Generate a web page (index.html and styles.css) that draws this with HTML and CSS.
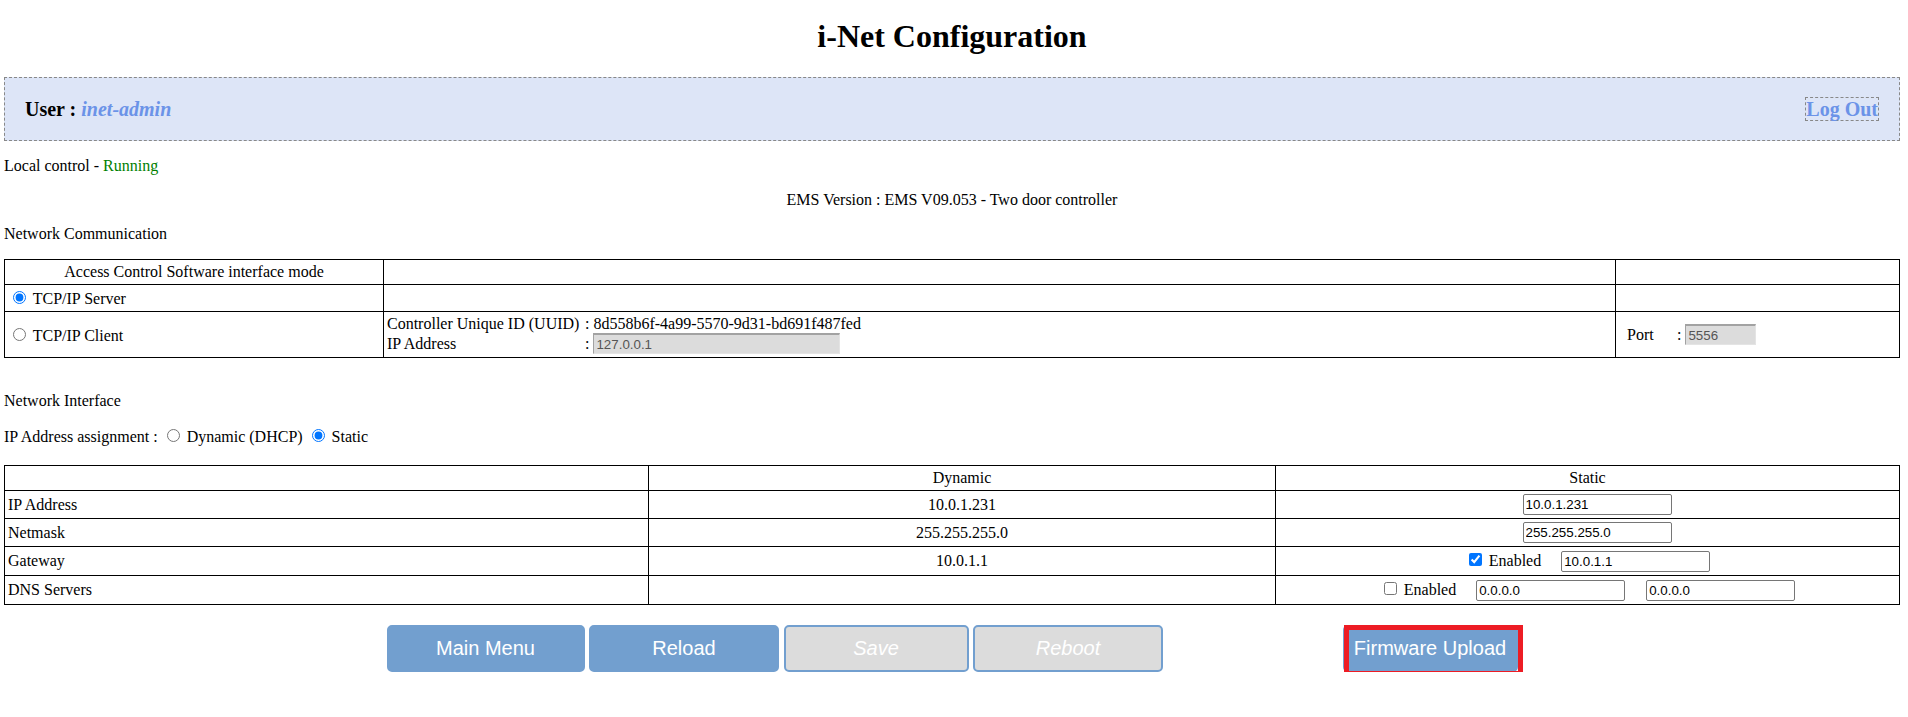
FILE: index.html
```html
<!DOCTYPE html>
<html lang="en">
<head>
<meta charset="utf-8">
<title>i-Net Configuration</title>
<link rel="stylesheet" href="styles.css">
</head>
<body>
<h1 class="title">i-Net Configuration</h1>

<div class="userbar">
  <div class="user">User : <span class="uname">inet-admin</span></div>
  <a class="logout" href="#">Log Out</a>
</div>

<p class="line">Local control - <span class="running">Running</span></p>
<p class="line center">EMS Version : EMS V09.053 - Two door controller</p>
<p class="line">Network Communication</p>

<table class="grid">
  <colgroup><col class="t1c1"><col class="t1c2"><col></colgroup>
  <tr>
    <td class="center">Access Control Software interface mode</td>
    <td></td>
    <td></td>
  </tr>
  <tr>
    <td><input type="radio" name="mode" checked> TCP/IP Server</td>
    <td></td>
    <td></td>
  </tr>
  <tr>
    <td><input type="radio" name="mode"> TCP/IP Client</td>
    <td><span class="lbl">Controller Unique ID (UUID)</span>: 8d558b6f-4a99-5570-9d31-bd691f487fed<br><span class="lbl">IP Address</span>: <input class="field dis ipc" type="text" value="127.0.0.1" disabled></td>
    <td><span class="portlbl">Port</span>: <input class="field dis port" type="text" value="5556" disabled></td>
  </tr>
</table>

<p class="line ni">Network Interface</p>
<p class="line assign">IP Address assignment : <input type="radio" name="ipa"> Dynamic (DHCP) <input type="radio" name="ipa" checked> Static</p>

<table class="grid">
  <colgroup><col class="t2c1"><col class="t2c2"><col></colgroup>
  <tr>
    <td></td>
    <td class="center">Dynamic</td>
    <td class="center">Static</td>
  </tr>
  <tr>
    <td>IP Address</td>
    <td class="center">10.0.1.231</td>
    <td class="center"><input class="field shift" type="text" value="10.0.1.231"></td>
  </tr>
  <tr>
    <td>Netmask</td>
    <td class="center">255.255.255.0</td>
    <td class="center"><input class="field shift" type="text" value="255.255.255.0"></td>
  </tr>
  <tr>
    <td>Gateway</td>
    <td class="center">10.0.1.1</td>
    <td class="center"><input type="checkbox" checked> Enabled<span class="sp"></span><input class="field" type="text" value="10.0.1.1"></td>
  </tr>
  <tr>
    <td>DNS Servers</td>
    <td class="center"></td>
    <td class="center"><input type="checkbox"> Enabled<span class="sp"></span><input class="field" type="text" value="0.0.0.0"><span class="sp2"></span><input class="field" type="text" value="0.0.0.0"></td>
  </tr>
</table>

<div class="actions">
  <button class="btn w-main">Main Menu</button>
  <button class="btn w-reload">Reload</button>
  <button class="btn off w-save" disabled>Save</button>
  <button class="btn off w-reboot" disabled>Reboot</button>
  <span class="hl"><button class="btn w-fw">Firmware Upload</button></span>
</div>
</body>
</html>
```

FILE: styles.css
```css
html, body {
  background: #ffffff;
}
body {
  margin: 0 8px 0 4px;
  font-family: "Liberation Serif", "Times New Roman", serif;
  font-size: 16px;
  color: #000;
}
.title {
  font-size: 32px;
  font-weight: bold;
  text-align: center;
  margin: 18px 0 22px;
  line-height: normal;
}
.userbar {
  display: flex;
  justify-content: space-between;
  align-items: center;
  background: #dde5f7;
  border: 1px dashed #888;
  padding: 19px 20px;
}
.user {
  font-size: 20px;
  font-weight: bold;
}
.uname {
  font-style: italic;
  color: #6b93e8;
}
.logout {
  font-size: 20px;
  font-weight: bold;
  color: #6b93e8;
  text-decoration: none;
  border: 1px dashed #888;
  line-height: 22px;
  display: inline-block;
}
.line {
  margin: 16px 0;
}
.center {
  text-align: center;
}
.running {
  color: #008000;
}
.ni {
  margin-top: 34px;
}
.assign {
  margin-bottom: 19px;
}
.grid {
  width: 100%;
  box-sizing: border-box;
  border-collapse: collapse;
  table-layout: fixed;
}
.grid td {
  border: 1px solid #000;
  padding: 3px;
}
.t1c1 { width: 379px; }
.t1c2 { width: 1232px; }
.t2c1 { width: 644px; }
.t2c2 { width: 627px; }
.lbl {
  display: inline-block;
  width: 198px;
}
.portlbl {
  display: inline-block;
  width: 50px;
  padding-left: 8px;
}
.field {
  box-sizing: border-box;
  font-family: "Liberation Sans", Arial, sans-serif;
  font-size: 13.33px;
  width: 149px;
  height: 21px;
  padding: 1px 2px;
  border: 1px solid #767676;
  border-radius: 2px;
  color: #000;
  background: #fff;
  margin: 0;
}
.dis {
  background: #dcdcdc;
  color: #555;
  border-radius: 0;
  border-style: solid;
  border-color: #a2a2a2 #e4e4e4 #e4e4e4 #a2a2a2;
  border-width: 2px 1px 1px 1px;
}
.ipc { width: 247px; }
.port { width: 71px; }
.shift { margin-left: 19px; }
.sp {
  display: inline-block;
  width: 20px;
}
.sp2 {
  display: inline-block;
  width: 21px;
}
.actions {
  display: flex;
  justify-content: center;
  align-items: flex-start;
  gap: 4.5px;
  margin-top: 20px;
}
.btn {
  box-sizing: border-box;
  height: 47px;
  padding: 0;
  font-family: "Liberation Sans", Arial, sans-serif;
  font-size: 20px;
  color: #fff;
  background: #729fcf;
  border: 2px solid #729fcf;
  border-radius: 5px;
}
.btn.off {
  background: #dcdcdc;
  font-style: italic;
  color: #fff;
}
.w-main { width: 198px; }
.w-reload { width: 190px; }
.w-save { width: 185px; }
.w-reboot { width: 190px; }
.w-fw { width: 175px; display: block; }
.hl {
  position: relative;
  display: block;
  margin-left: 175px;
}
.hl::after {
  content: "";
  position: absolute;
  left: 1px;
  top: 0;
  width: 179px;
  height: 51px;
  box-sizing: border-box;
  border: 5px solid #ed1c24;
}
```
